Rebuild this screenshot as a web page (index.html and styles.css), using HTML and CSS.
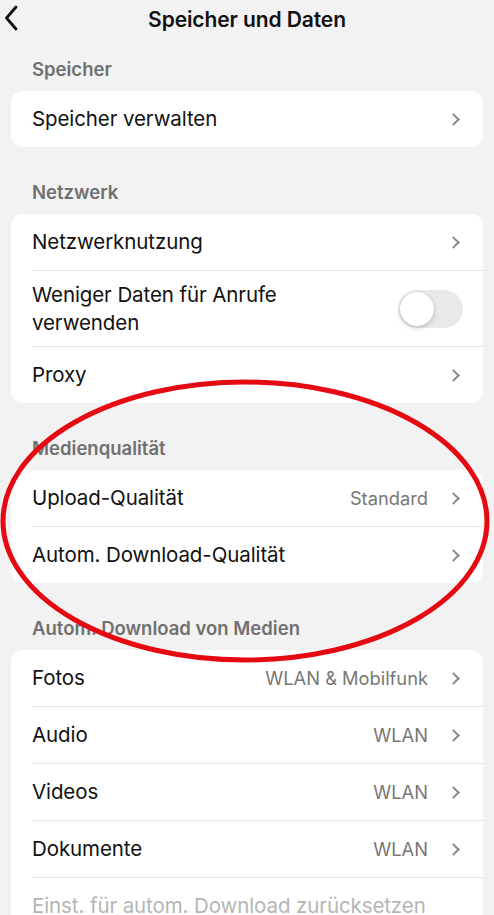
FILE: index.html
```html
<!DOCTYPE html>
<html lang="de">
<head>
<meta charset="utf-8">
<title>Speicher und Daten</title>
<link rel="stylesheet" href="styles.css">
</head>
<body>
<div class="screen">
  <header class="nav">
    <span class="back"><svg width="14" height="26" viewBox="0 0 14 26"><path d="M12 2 L2.5 13 L12 24" fill="none" stroke="#111" stroke-width="2.8" stroke-linecap="round" stroke-linejoin="round"/></svg></span>
    <h1 class="title">Speicher und Daten</h1>
  </header>

  <section class="group">
    <div class="label">Speicher</div>
    <div class="card">
      <div class="row"><span class="text">Speicher verwalten</span><span class="chev"></span></div>
    </div>
  </section>

  <section class="group">
    <div class="label">Netzwerk</div>
    <div class="card">
      <div class="row"><span class="text">Netzwerknutzung</span><span class="chev"></span></div>
      <div class="row tall"><span class="text">Weniger Daten für Anrufe<br>verwenden</span><span class="toggle"><span class="knob"></span></span></div>
      <div class="row"><span class="text">Proxy</span><span class="chev"></span></div>
    </div>
  </section>

  <section class="group">
    <div class="label">Medienqualität</div>
    <div class="card">
      <div class="row"><span class="text">Upload-Qualität</span><span class="value">Standard</span><span class="chev"></span></div>
      <div class="row"><span class="text">Autom. Download-Qualität</span><span class="chev"></span></div>
    </div>
  </section>

  <section class="group">
    <div class="label">Autom. Download von Medien</div>
    <div class="card">
      <div class="row"><span class="text">Fotos</span><span class="value">WLAN &amp; Mobilfunk</span><span class="chev"></span></div>
      <div class="row"><span class="text">Audio</span><span class="value">WLAN</span><span class="chev"></span></div>
      <div class="row"><span class="text">Videos</span><span class="value">WLAN</span><span class="chev"></span></div>
      <div class="row"><span class="text">Dokumente</span><span class="value">WLAN</span><span class="chev"></span></div>
      <div class="row"><span class="text disabled">Einst. für autom. Download zurücksetzen</span></div>
    </div>
  </section>

  <svg class="circle" width="494" height="915" viewBox="0 0 494 915">
    <ellipse cx="245" cy="521" rx="242" ry="139" fill="none" stroke="#e50912" stroke-width="5"/>
  </svg>
</div>
</body>
</html>
```
FILE: styles.css
```css
* { box-sizing: border-box; }
html, body { margin: 0; padding: 0; }
body {
  background: #f2f2f2;
  font-family: Inter, "Noto Sans", "Liberation Sans", sans-serif;
  color: #111;
  width: 494px;
  height: 915px;
  overflow: hidden;
}
.screen { position: relative; width: 494px; height: 915px; overflow: hidden; }
.nav {
  height: 38px;
  display: flex;
  align-items: center;
  justify-content: center;
  position: relative;
}
.back {
  position: absolute;
  left: 4px;
  top: 5px;
  display: flex;
}
.title {
  margin: 0;
  font-size: 21px;
  font-weight: 600;
  letter-spacing: -0.1px;
}
.group { padding-top: 20px; }
.group + .group { padding-top: 34px; }
.label {
  height: 22px;
  line-height: 22px;
  padding-left: 32px;
  font-size: 18.5px;
  font-weight: 600;
  color: #707070;
  margin-bottom: 11px;
}
.card {
  margin: 0 11px;
  background: #fff;
  border-radius: 12px;
  overflow: hidden;
}
.row {
  height: 57px;
  display: flex;
  align-items: center;
  margin-left: 21px;
  padding-right: 22px;
  border-top: 1px solid #e3e3e3;
}
.row:first-child { border-top: none; height: 56px; }
.row.tall { height: 76px; }
.text {
  flex: 1;
  font-size: 20.5px;
  line-height: 28px;
  letter-spacing: -0.1px;
}
.text.disabled { color: #b5b5b5; }
.value {
  font-size: 18.3px;
  color: #777;
  margin-right: 21px;
}
.chev {
  width: 9px;
  height: 9px;
  border-top: 2px solid #8a8a8a;
  border-right: 2px solid #8a8a8a;
  transform: rotate(45deg);
  margin-right: 3px;
}
.toggle {
  width: 65px;
  height: 38px;
  border-radius: 19px;
  background: #e9e9eb;
  display: flex;
  align-items: center;
  padding: 2px;
  margin-right: -2px;
}
.knob {
  width: 34px;
  height: 34px;
  border-radius: 50%;
  background: #fff;
  box-shadow: 0 2px 5px rgba(0,0,0,0.18), 0 0 1px rgba(0,0,0,0.15);
}
.circle {
  position: absolute;
  left: 0;
  top: 0;
  pointer-events: none;
}
```
